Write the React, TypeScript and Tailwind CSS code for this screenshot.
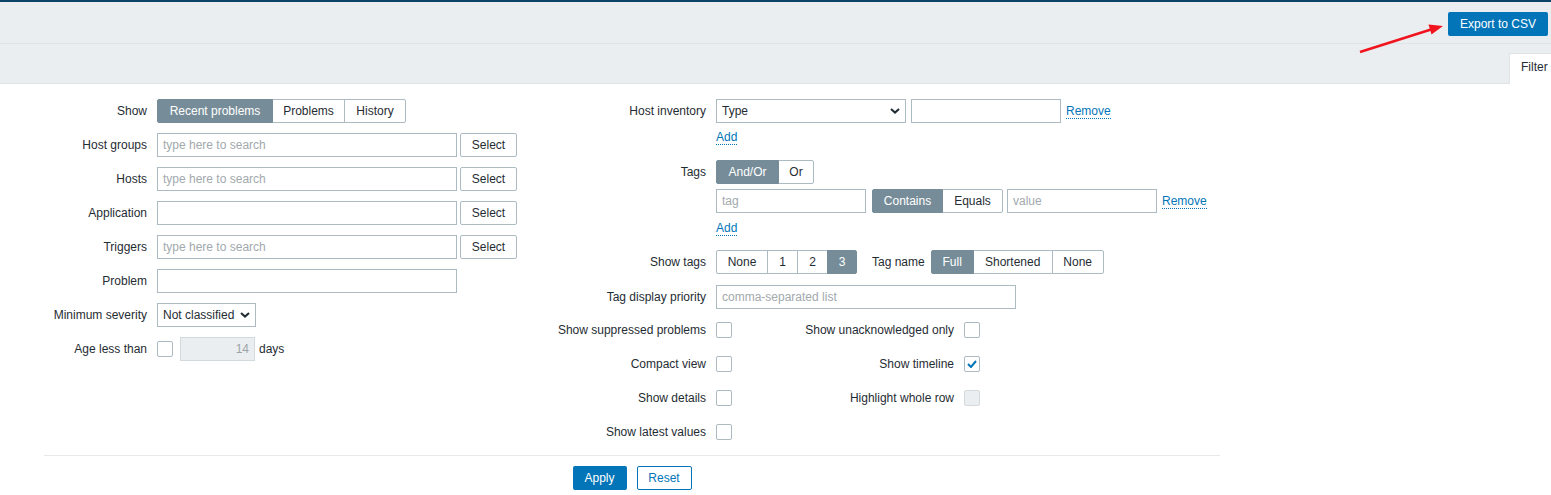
import React from "react";

const txt = "text-[#1f2c33]";

type SegItem = { label: string; w: string };

function Seg({ items, active }: { items: SegItem[]; active: number }) {
  return (
    <div className="flex h-[24px]">
      {items.map((it, i) => {
        const on = i === active;
        return (
          <div
            key={i}
            className={`${it.w} ${i > 0 ? "-ml-px" : ""} ${i === 0 ? "rounded-l-[2px]" : ""} ${
              i === items.length - 1 ? "rounded-r-[2px]" : ""
            } flex h-[24px] items-center justify-center border ${
              on ? "relative z-10 border-[#768d99] bg-[#768d99] text-white" : `border-[#acbbc2] bg-white ${txt}`
            }`}
          >
            {it.label}
          </div>
        );
      })}
    </div>
  );
}

function Box({ w, placeholder, value, className = "" }: { w: string; placeholder?: string; value?: string; className?: string }) {
  return (
    <div className={`${w} flex h-[24px] items-center border border-[#acbbc2] bg-white px-[5px] ${className}`}>
      {value ? <span className={txt}>{value}</span> : <span className="text-[#a2a9ad]">{placeholder}</span>}
    </div>
  );
}

function Chevron() {
  return (
    <svg width="10" height="6" viewBox="0 0 10 6" className="shrink-0">
      <path d="M1 1l4 3.6L9 1" fill="none" stroke="#1f2c33" strokeWidth="2" />
    </svg>
  );
}

function SelectBox({ w, value }: { w: string; value: string }) {
  return (
    <div className={`${w} flex h-[24px] items-center justify-between border border-[#acbbc2] bg-white pl-[5px] pr-[5px] ${txt}`}>
      <span>{value}</span>
      <Chevron />
    </div>
  );
}

function Btn({ children }: { children: React.ReactNode }) {
  return (
    <div className={`ml-[3px] flex h-[24px] w-[57px] items-center justify-center rounded-[2px] border border-[#acbbc2] bg-white ${txt}`}>
      {children}
    </div>
  );
}

function Check({ checked = false, disabled = false }: { checked?: boolean; disabled?: boolean }) {
  return (
    <div
      className={`flex h-[16px] w-[16px] items-center justify-center rounded-[2px] border ${
        disabled ? "border-[#d3dadd] bg-[#ebeef0]" : "border-[#acbbc2] bg-white"
      }`}
    >
      {checked && (
        <svg width="10" height="8" viewBox="0 0 10 8">
          <path d="M1 4l3 3 5-6" fill="none" stroke="#0275b8" strokeWidth="2" />
        </svg>
      )}
    </div>
  );
}

function LinkText({ children }: { children: React.ReactNode }) {
  return (
    <span className="inline-block border-b border-dotted border-[#0275b8] leading-[14px] text-[#0275b8]">{children}</span>
  );
}

function LeftRow({ label, children }: { label: string; children: React.ReactNode }) {
  return (
    <div className="flex h-[24px] items-center">
      <div className={`w-[103px] text-right ${txt}`}>{label}</div>
      <div className="ml-[10px] flex items-center">{children}</div>
    </div>
  );
}

function MidRow({ label, children, className = "" }: { label?: string; children: React.ReactNode; className?: string }) {
  return (
    <div className={`flex min-h-[24px] items-center ${className}`}>
      <div className={`w-[162px] shrink-0 text-right ${txt}`}>{label}</div>
      <div className="ml-[10px] flex items-center">{children}</div>
    </div>
  );
}

function CheckRow({ label, right }: { label: string; right?: { label: string; checked?: boolean; disabled?: boolean } }) {
  return (
    <div className="flex h-[24px] items-center">
      <div className={`w-[162px] text-right ${txt}`}>{label}</div>
      <div className="ml-[10px]">
        <Check />
      </div>
      {right && (
        <>
          <div className={`w-[222px] text-right ${txt}`}>{right.label}</div>
          <div className="ml-[10px]">
            <Check checked={right.checked} disabled={right.disabled} />
          </div>
        </>
      )}
    </div>
  );
}

export default function App() {
  return (
    <div className="relative min-h-[495px] w-[1551px] bg-white font-['Liberation_Sans',Arial,sans-serif] text-[12px]">
      <div className="flex h-[44px] justify-end border-t-2 border-b border-t-[#0b4466] border-b-[#dfe4e7] bg-[#ebeef0] pr-[3px] pt-[10px]">
        <div className="flex h-[24px] w-[100px] items-center justify-center rounded-[2px] bg-[#0275b8] text-white">
          Export to CSV
        </div>
      </div>
      <div className="flex h-[40px] items-end justify-end border-b border-[#dfe4e7] bg-[#ebeef0]">
        <div className={`-mb-px flex h-[31px] w-[42px] items-center border-l border-t border-[#dfe4e7] bg-white pb-[5px] pl-[11px] ${txt}`}>
          Filter
        </div>
      </div>

      <svg className="pointer-events-none absolute left-0 top-0" width="1551" height="80">
        <line x1="1360" y1="52" x2="1431" y2="29.5" stroke="#f0141e" strokeWidth="2.5" />
        <polygon points="1443,26 1428.5,24.5 1431.5,34.5" fill="#f0141e" />
      </svg>

      <div className="ml-[44px] w-[1176px] pt-[15px]">
        <div className="flex">
          <div className="flex w-[500px] flex-col gap-[10px]">
            <LeftRow label="Show">
              <Seg
                active={0}
                items={[
                  { label: "Recent problems", w: "w-[116px]" },
                  { label: "Problems", w: "w-[73px]" },
                  { label: "History", w: "w-[62px]" },
                ]}
              />
            </LeftRow>
            <LeftRow label="Host groups">
              <Box w="w-[300px]" placeholder="type here to search" />
              <Btn>Select</Btn>
            </LeftRow>
            <LeftRow label="Hosts">
              <Box w="w-[300px]" placeholder="type here to search" />
              <Btn>Select</Btn>
            </LeftRow>
            <LeftRow label="Application">
              <Box w="w-[300px]" />
              <Btn>Select</Btn>
            </LeftRow>
            <LeftRow label="Triggers">
              <Box w="w-[300px]" placeholder="type here to search" />
              <Btn>Select</Btn>
            </LeftRow>
            <LeftRow label="Problem">
              <Box w="w-[300px]" />
            </LeftRow>
            <LeftRow label="Minimum severity">
              <SelectBox w="w-[99px]" value="Not classified" />
            </LeftRow>
            <LeftRow label="Age less than">
              <Check />
              <div className="ml-[7px] flex h-[24px] w-[75px] items-center justify-end border border-[#d3dadd] bg-[#ebeef0] px-[5px] text-[#9aa4a9]">
                14
              </div>
              <span className={`ml-[4px] ${txt}`}>days</span>
            </LeftRow>
          </div>

          <div className="flex flex-col">
            <MidRow label="Host inventory">
              <SelectBox w="w-[190px]" value="Type" />
              <Box w="w-[150px]" className="ml-[5px]" />
              <span className="ml-[5px]">
                <LinkText>Remove</LinkText>
              </span>
            </MidRow>
            <div className="ml-[172px] mt-[5px] h-[16px]">
              <LinkText>Add</LinkText>
            </div>
            <MidRow label="Tags" className="mt-[16px]">
              <Seg
                active={0}
                items={[
                  { label: "And/Or", w: "w-[63px]" },
                  { label: "Or", w: "w-[36px]" },
                ]}
              />
            </MidRow>
            <MidRow className="mt-[5px]">
              <Box w="w-[150px]" placeholder="tag" />
              <div className="ml-[6px]">
                <Seg
                  active={0}
                  items={[
                    { label: "Contains", w: "w-[71px]" },
                    { label: "Equals", w: "w-[61px]" },
                  ]}
                />
              </div>
              <Box w="w-[150px]" placeholder="value" className="ml-[4px]" />
              <span className="ml-[5px]">
                <LinkText>Remove</LinkText>
              </span>
            </MidRow>
            <div className="ml-[172px] mt-[6px] h-[16px]">
              <LinkText>Add</LinkText>
            </div>
            <MidRow label="Show tags" className="mt-[15px]">
              <Seg
                active={3}
                items={[
                  { label: "None", w: "w-[52px]" },
                  { label: "1", w: "w-[31px]" },
                  { label: "2", w: "w-[31px]" },
                  { label: "3", w: "w-[30px]" },
                ]}
              />
              <span className={`ml-[15px] ${txt}`}>Tag name</span>
              <div className="ml-[6px]">
                <Seg
                  active={0}
                  items={[
                    { label: "Full", w: "w-[43px]" },
                    { label: "Shortened", w: "w-[80px]" },
                    { label: "None", w: "w-[52px]" },
                  ]}
                />
              </div>
            </MidRow>
            <MidRow label="Tag display priority" className="mt-[11px]">
              <Box w="w-[300px]" placeholder="comma-separated list" />
            </MidRow>
            <div className="mt-[9px] flex flex-col gap-[10px]">
              <CheckRow label="Show suppressed problems" right={{ label: "Show unacknowledged only" }} />
              <CheckRow label="Compact view" right={{ label: "Show timeline", checked: true }} />
              <CheckRow label="Show details" right={{ label: "Highlight whole row", disabled: true }} />
              <CheckRow label="Show latest values" />
            </div>
          </div>
        </div>

        <div className="mt-[11px] flex justify-center gap-[10px] border-t border-[#e6e9eb] pt-[10px]">
          <div className="flex h-[24px] w-[54px] items-center justify-center rounded-[2px] bg-[#0275b8] text-white">Apply</div>
          <div className="flex h-[24px] w-[55px] items-center justify-center rounded-[2px] border border-[#0275b8] bg-white text-[#0275b8]">
            Reset
          </div>
        </div>
      </div>
    </div>
  );
}
